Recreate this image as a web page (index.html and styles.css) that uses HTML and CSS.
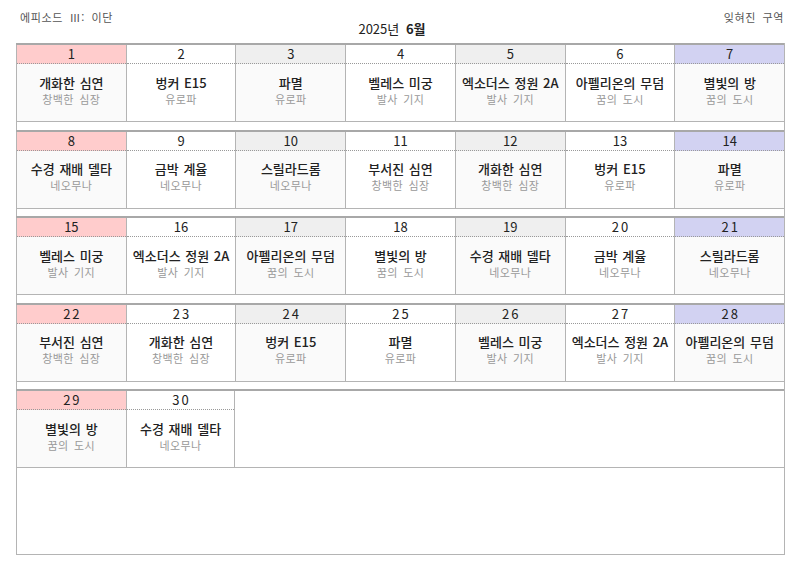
FILE: index.html
```html
<!DOCTYPE html>
<html lang="ko">
<head>
<meta charset="utf-8">
<link rel="stylesheet" href="styles.css">
</head>
<body>
<div class="page">
  <div class="topbar">
    <div class="ep">에피소드 Ⅲ: 이단</div>
    <div class="month">2025년 <b>6월</b></div>
    <div class="zone">잊혀진 구역</div>
  </div>
  <div class="calendar">
    <div class="week">
      <div class="cell sun"><div class="num">1</div><div class="body"><div class="t">개화한 심연</div><div class="s">창백한 심장</div></div></div>
      <div class="cell"><div class="num">2</div><div class="body"><div class="t">벙커 E15</div><div class="s">유로파</div></div></div>
      <div class="cell alt"><div class="num">3</div><div class="body"><div class="t">파멸</div><div class="s">유로파</div></div></div>
      <div class="cell"><div class="num">4</div><div class="body"><div class="t">벨레스 미궁</div><div class="s">발사 기지</div></div></div>
      <div class="cell alt"><div class="num">5</div><div class="body"><div class="t">엑소더스 정원 2A</div><div class="s">발사 기지</div></div></div>
      <div class="cell"><div class="num">6</div><div class="body"><div class="t">아펠리온의 무덤</div><div class="s">꿈의 도시</div></div></div>
      <div class="cell sat"><div class="num">7</div><div class="body"><div class="t">별빛의 방</div><div class="s">꿈의 도시</div></div></div>
    </div>
    <div class="week">
      <div class="cell sun"><div class="num">8</div><div class="body"><div class="t">수경 재배 델타</div><div class="s">네오무나</div></div></div>
      <div class="cell"><div class="num">9</div><div class="body"><div class="t">금박 계율</div><div class="s">네오무나</div></div></div>
      <div class="cell alt"><div class="num">10</div><div class="body"><div class="t">스릴라드롬</div><div class="s">네오무나</div></div></div>
      <div class="cell"><div class="num">11</div><div class="body"><div class="t">부서진 심연</div><div class="s">창백한 심장</div></div></div>
      <div class="cell alt"><div class="num">12</div><div class="body"><div class="t">개화한 심연</div><div class="s">창백한 심장</div></div></div>
      <div class="cell"><div class="num">13</div><div class="body"><div class="t">벙커 E15</div><div class="s">유로파</div></div></div>
      <div class="cell sat"><div class="num">14</div><div class="body"><div class="t">파멸</div><div class="s">유로파</div></div></div>
    </div>
    <div class="week">
      <div class="cell sun"><div class="num">15</div><div class="body"><div class="t">벨레스 미궁</div><div class="s">발사 기지</div></div></div>
      <div class="cell"><div class="num">16</div><div class="body"><div class="t">엑소더스 정원 2A</div><div class="s">발사 기지</div></div></div>
      <div class="cell alt"><div class="num">17</div><div class="body"><div class="t">아펠리온의 무덤</div><div class="s">꿈의 도시</div></div></div>
      <div class="cell"><div class="num">18</div><div class="body"><div class="t">별빛의 방</div><div class="s">꿈의 도시</div></div></div>
      <div class="cell alt"><div class="num">19</div><div class="body"><div class="t">수경 재배 델타</div><div class="s">네오무나</div></div></div>
      <div class="cell"><div class="num wide">20</div><div class="body"><div class="t">금박 계율</div><div class="s">네오무나</div></div></div>
      <div class="cell sat"><div class="num wide">21</div><div class="body"><div class="t">스릴라드롬</div><div class="s">네오무나</div></div></div>
    </div>
    <div class="week">
      <div class="cell sun"><div class="num wide">22</div><div class="body"><div class="t">부서진 심연</div><div class="s">창백한 심장</div></div></div>
      <div class="cell"><div class="num wide">23</div><div class="body"><div class="t">개화한 심연</div><div class="s">창백한 심장</div></div></div>
      <div class="cell alt"><div class="num wide">24</div><div class="body"><div class="t">벙커 E15</div><div class="s">유로파</div></div></div>
      <div class="cell"><div class="num wide">25</div><div class="body"><div class="t">파멸</div><div class="s">유로파</div></div></div>
      <div class="cell alt"><div class="num wide">26</div><div class="body"><div class="t">벨레스 미궁</div><div class="s">발사 기지</div></div></div>
      <div class="cell"><div class="num wide">27</div><div class="body"><div class="t">엑소더스 정원 2A</div><div class="s">발사 기지</div></div></div>
      <div class="cell sat"><div class="num wide">28</div><div class="body"><div class="t">아펠리온의 무덤</div><div class="s">꿈의 도시</div></div></div>
    </div>
    <div class="week">
      <div class="cell sun"><div class="num wide">29</div><div class="body"><div class="t">별빛의 방</div><div class="s">꿈의 도시</div></div></div>
      <div class="cell"><div class="num wide">30</div><div class="body"><div class="t">수경 재배 델타</div><div class="s">네오무나</div></div></div>
    </div>
  </div>
</div>
</body>
</html>
```

FILE: styles.css
```css
* { box-sizing: border-box; }
html, body { margin: 0; padding: 0; background: #fff; }
body {
  font-family: "Noto Sans CJK KR", "Noto Sans", sans-serif;
  color: #222;
}
.page {
  width: 800px;
  height: 566px;
  padding: 0 15px 0 16px;
}
.topbar {
  height: 43px;
  width: 769px;
  display: grid;
  grid-template-columns: 1fr auto 1fr;
  align-items: start;
}
.ep {
  font-size: 11px;
  color: #555;
  padding: 9px 0 0 4px;
  letter-spacing: 0.6px;
  word-spacing: 3px;
}
.month {
  font-size: 13px;
  color: #222;
  padding: 19px 17px 0 0;
}
.month b { font-weight: 700; margin-left: 3px; }
.zone {
  font-size: 11px;
  color: #555;
  text-align: right;
  padding: 9px 1px 0 0;
  letter-spacing: 0.6px;
  word-spacing: 3px;
}
.calendar {
  width: 769px;
  height: 512px;
  border: 1px solid #b4b4b4;
  border-top: none;
  display: flex;
  flex-direction: column;
  gap: 7.5px;
}
.week {
  display: grid;
  grid-template-columns: repeat(7, 109.72px);
  width: max-content;
  margin-left: -1px;
  border-top: 2px solid #a8a8a8;
  border-bottom: 1px solid #b4b4b4;
}
.cell {
  border-left: 1px solid #b4b4b4;
  background: #fff;
}
.cell:last-child { border-right: 1px solid #b4b4b4; }
.week:not(:last-child) .cell:last-child { border-right: none; }
.num {
  height: 19px;
  font-size: 13px;
  line-height: 18px;
  text-align: center;
  border-bottom: 1px dotted #999;
  color: #222;
}
.num.wide { letter-spacing: 2px; text-indent: 2px; }
.body {
  height: 57px;
  display: flex;
  flex-direction: column;
  align-items: center;
  justify-content: center;
  padding-bottom: 5px;
}
.t {
  font-size: 13px;
  line-height: 18px;
  color: #222;
  font-weight: 500;
  word-spacing: 1px;
}
.s {
  font-size: 11px;
  line-height: 15px;
  color: #999;
  letter-spacing: 0.4px;
  word-spacing: 2px;
}
.sun .num { background: #ffcccc; }
.sat .num { background: #d2d2f2; }
.alt .num { background: #efefef; }
.sun .body, .alt .body, .sat .body { background: #fafafa; }
```
